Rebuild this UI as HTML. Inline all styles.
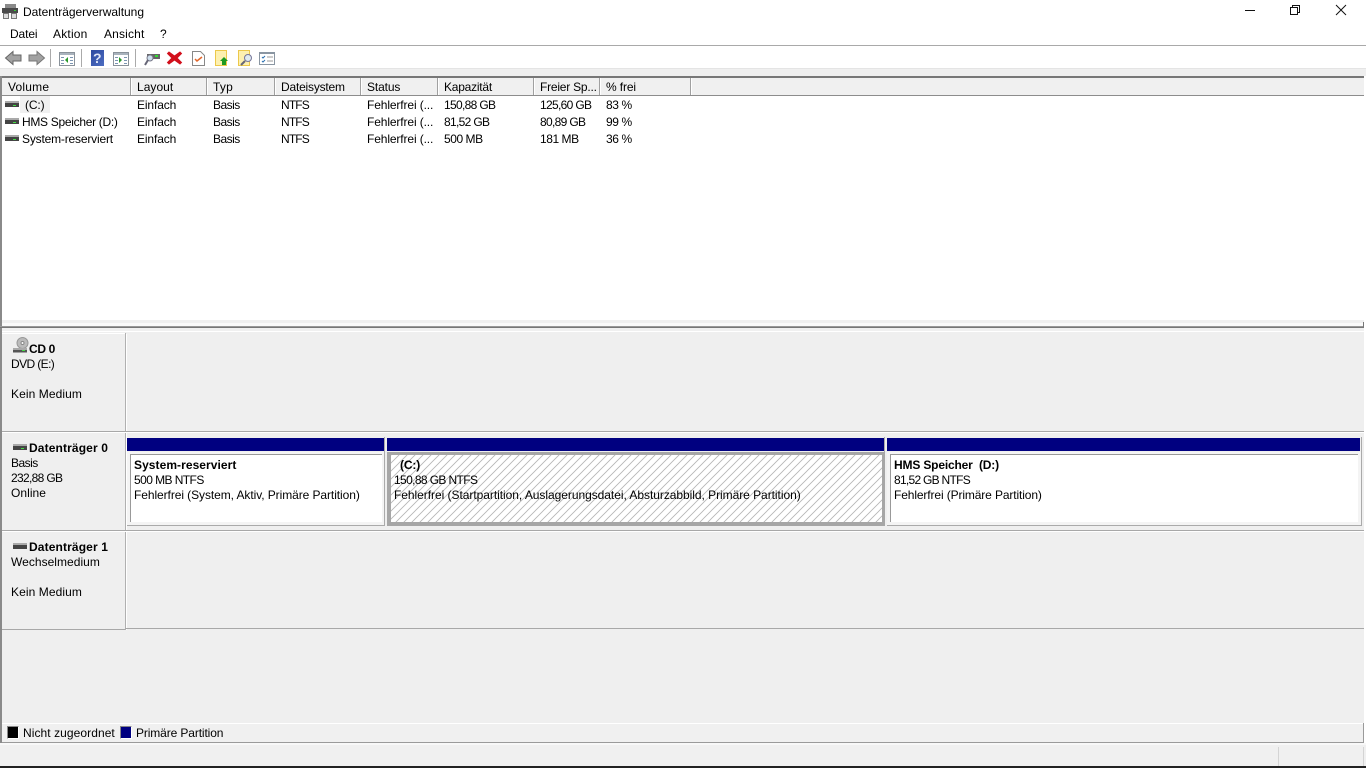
<!DOCTYPE html>
<html lang="de"><head><meta charset="utf-8"><title>Datenträgerverwaltung</title>
<style>
html,body{margin:0;padding:0;background:#f0f0f0;overflow:hidden}
#p{position:relative;width:1366px;height:768px;overflow:hidden;background:#f0f0f0;font:12px/16px "Liberation Sans",sans-serif;color:#000}
#p div{position:absolute}
.t{position:absolute;white-space:nowrap;line-height:16px;letter-spacing:-.12px}
.b{font-weight:bold}
.n{letter-spacing:-.67px}
.s{letter-spacing:-.45px}
.ba{letter-spacing:-.52px}
.nt{letter-spacing:-.85px}
.pc{letter-spacing:-.4px}
svg{position:absolute;overflow:visible}
.h{top:78px;height:17px;width:1px;background:#a0a0a0;border-right:1px solid #fff}
.d{width:14px;height:6px;background:linear-gradient(#aaa 0,#aaa 2px,#444 2px,#444 100%)}
.g{width:3px;height:1px;background:#4d4}
</style></head><body><div id="p">
<div style="left:0;top:0;width:1366px;height:45px;background:#fff"></div>
<div style="left:0;top:45px;width:1366px;height:1px;background:#a9a9a9"></div>
<div style="left:0;top:46px;width:1366px;height:22px;background:#fff"></div>
<div style="left:0;top:68px;width:1366px;height:8px;background:#efefef;border-top:1px solid #e4e4e4;box-sizing:border-box"></div>

<!-- title -->
<svg style="left:2px;top:4px" width="16" height="15" viewBox="0 0 16 15"><rect x="3" y="0" width="11" height="4" fill="#8a8a8a"/><rect x="0" y="4" width="16" height="5" fill="#4a4a4a"/><rect x="1.500" y="9.500" width="5" height="5" fill="#ddd" stroke="#777"/><rect x="9.500" y="9.500" width="5" height="5" fill="#ddd" stroke="#777"/><rect x="12" y="6" width="2" height="1" fill="#3c3"/></svg>
<span class="t" style="left:23px;top:4px;letter-spacing:-.02px">Datenträgerverwaltung</span>
<div style="left:1245px;top:10px;width:10px;height:1px;background:#111"></div>
<svg style="left:1290px;top:5px" width="10" height="10" viewBox="0 0 10 10" fill="none" stroke="#111"><path d="M.5 2.500h7v7h-7zM2.500 2.500v-2h7v7h-2"/></svg>
<svg style="left:1336px;top:5px" width="10" height="10" viewBox="0 0 10 10" fill="none" stroke="#111"><path d="M0 0l10 10M10 0L0 10"/></svg>

<!-- menu -->
<span class="t" style="left:10px;top:26px">Datei</span>
<span class="t" style="left:53px;top:26px;letter-spacing:.2px">Aktion</span>
<span class="t" style="left:104px;top:26px;letter-spacing:.16px">Ansicht</span>
<span class="t" style="left:160px;top:26px">?</span>

<!-- toolbar -->
<svg style="left:5px;top:50px" width="17" height="16" viewBox="0 0 17 16"><path d="M.5 8L8 1.500V5h8v6H8v3.500z" fill="#a2a2a2" stroke="#666"/></svg>
<svg style="left:28px;top:50px" width="17" height="16" viewBox="0 0 17 16"><path d="M16.500 8L9 1.500V5H1v6h8v3.500z" fill="#a2a2a2" stroke="#777"/></svg>
<div style="left:50px;top:49px;width:1px;height:18px;background:#aaa"></div>
<svg style="left:59px;top:52px" width="16" height="14" viewBox="0 0 16 14"><rect x=".5" y=".5" width="15" height="13" fill="#fff" stroke="#8a929a"/><rect x="1" y="1" width="14" height="2" fill="#a9b3bd"/><path d="M2 5h3v1H2zM2 8h3v1H2zM2 11h3v1H2zM11 5h3v1h-3zM11 8h3v1h-3zM11 11h3v1h-3z" fill="#7b95b2"/><path d="M9 5v6L6 8z" fill="#2a9a2a"/></svg>
<div style="left:81px;top:49px;width:1px;height:18px;background:#aaa"></div>
<div style="left:91px;top:50px;width:13px;height:16px;background:linear-gradient(135deg,#2c4aa0,#4c6cc0)"></div>
<span class="t b" style="left:93px;top:50px;color:#dfe6f7;font-size:14px">?</span>
<svg style="left:113px;top:52px" width="16" height="14" viewBox="0 0 16 14"><rect x=".5" y=".5" width="15" height="13" fill="#fff" stroke="#8a929a"/><rect x="1" y="1" width="14" height="2" fill="#a9b3bd"/><path d="M2 5h3v1H2zM2 8h3v1H2zM2 11h3v1H2zM11 5h3v1h-3zM11 8h3v1h-3zM11 11h3v1h-3z" fill="#7b95b2"/><path d="M6 5v6l3-3z" fill="#2a9a2a"/></svg>
<div style="left:135px;top:49px;width:1px;height:18px;background:#aaa"></div>
<svg style="left:144px;top:52px" width="16" height="15" viewBox="0 0 16 15"><rect x="3" y="2" width="13" height="5" fill="#666"/><rect x="11" y="3" width="3" height="2" fill="#3d3"/><circle cx="6" cy="6" r="3" fill="#cfe0ee" stroke="#778"/><path d="M4 8L1 13" stroke="#667" stroke-width="2"/></svg>
<svg style="left:167px;top:51px" width="15" height="14" viewBox="0 0 15 14"><path d="M2 1l5.500 4L13 1l1.500 1.500L10 7l4.500 4.500L13 13 7.500 9 2 13 .5 11.500 5 7 .5 2.500z" fill="#d2101c" stroke="#d2101c"/></svg>
<svg style="left:192px;top:51px" width="13" height="15" viewBox="0 0 13 15"><path d="M.5.500h8l4 4v10H.5z" fill="#fff" stroke="#888"/><path d="M3 8l2 2 5-4" fill="none" stroke="#e2662a" stroke-width="1.500"/></svg>
<svg style="left:215px;top:50px" width="14" height="16" viewBox="0 0 14 16"><rect x=".5" y=".5" width="11" height="15" fill="#fdf0b0" stroke="#ecc84a"/><path d="M9 7l4 4h-2v4H7v-4H5z" fill="#1d9a22"/></svg>
<svg style="left:238px;top:50px" width="15" height="16" viewBox="0 0 15 16"><rect x=".5" y=".5" width="11" height="15" fill="#fdf0b0" stroke="#ecc84a"/><circle cx="10" cy="8" r="3.500" fill="#dfeaf2" stroke="#779"/><path d="M7 11l-4 4" stroke="#667" stroke-width="2"/></svg>
<svg style="left:259px;top:52px" width="16" height="13" viewBox="0 0 16 13"><rect x=".5" y=".5" width="15" height="12" fill="#fff" stroke="#8a96a2"/><rect x="1" y="1" width="14" height="1" fill="#8a96a2"/><path d="M3 5l1 1 2-2M3 9l1 1 2-2" stroke="#2a70b0" fill="none"/><path d="M8 5h6M8 9h6" stroke="#999"/></svg>

<!-- list -->
<div style="left:1364px;top:76px;width:2px;height:667px;background:#fff"></div>
<div style="left:0;top:76px;width:1364px;height:2px;background:#777"></div>
<div style="left:0;top:76px;width:2px;height:252px;background:#8a8a8a"></div>
<div style="left:2px;top:78px;width:1362px;height:242px;background:#fff"></div>
<div style="left:2px;top:78px;width:1362px;height:17px;background:#f0f0f0"></div>
<div style="left:2px;top:95px;width:1362px;height:1px;background:#8c8c8c"></div>
<div class="h" style="left:130px"></div><div class="h" style="left:206px"></div><div class="h" style="left:274px"></div><div class="h" style="left:360px"></div><div class="h" style="left:437px"></div><div class="h" style="left:533px"></div><div class="h" style="left:599px"></div><div class="h" style="left:690px"></div>
<span class="t" style="left:8px;top:79px;letter-spacing:.2px">Volume</span><span class="t" style="left:137px;top:79px;letter-spacing:.04px">Layout</span><span class="t" style="left:213px;top:79px;letter-spacing:.2px">Typ</span><span class="t" style="left:281px;top:79px;letter-spacing:-.2px">Dateisystem</span><span class="t" style="left:367px;top:79px">Status</span><span class="t" style="left:444px;top:79px;letter-spacing:-.23px">Kapazität</span><span class="t" style="left:540px;top:79px;letter-spacing:-.22px">Freier Sp...</span><span class="t" style="left:606px;top:79px">% frei</span>

<div style="left:20px;top:96px;width:30px;height:17px;background:#f0f0f0"></div>
<div class="d" style="left:5px;top:101px"></div><div class="g" style="left:13px;top:105px"></div>
<div class="d" style="left:5px;top:118px"></div><div class="g" style="left:13px;top:122px"></div>
<div class="d" style="left:5px;top:135px"></div><div class="g" style="left:13px;top:139px"></div>

<span class="t" style="left:25px;top:97px">(C:)</span><span class="t" style="left:137px;top:97px">Einfach</span><span class="t ba" style="left:213px;top:97px">Basis</span><span class="t nt" style="left:281px;top:97px">NTFS</span><span class="t" style="left:367px;top:97px">Fehlerfrei (...</span><span class="t n" style="left:444px;top:97px">150,88 GB</span><span class="t n" style="left:540px;top:97px">125,60 GB</span><span class="t pc" style="left:606px;top:97px">83 %</span>
<span class="t" style="left:22px;top:114px;letter-spacing:-.3px">HMS Speicher (D:)</span><span class="t" style="left:137px;top:114px">Einfach</span><span class="t ba" style="left:213px;top:114px">Basis</span><span class="t nt" style="left:281px;top:114px">NTFS</span><span class="t" style="left:367px;top:114px">Fehlerfrei (...</span><span class="t n" style="left:444px;top:114px">81,52 GB</span><span class="t n" style="left:540px;top:114px">80,89 GB</span><span class="t pc" style="left:606px;top:114px">99 %</span>
<span class="t" style="left:22px;top:131px;letter-spacing:-.18px">System-reserviert</span><span class="t" style="left:137px;top:131px">Einfach</span><span class="t ba" style="left:213px;top:131px">Basis</span><span class="t nt" style="left:281px;top:131px">NTFS</span><span class="t" style="left:367px;top:131px">Fehlerfrei (...</span><span class="t s" style="left:444px;top:131px">500 MB</span><span class="t s" style="left:540px;top:131px">181 MB</span><span class="t pc" style="left:606px;top:131px">36 %</span>

<!-- splitter -->
<div style="left:2px;top:320px;width:1362px;height:3px;background:#f0f0f0"></div>
<div style="left:2px;top:323px;width:1362px;height:3px;background:#fafafa"></div>
<div style="left:0;top:326px;width:1364px;height:1px;background:#999"></div>
<div style="left:0;top:327px;width:1364px;height:1px;background:#777"></div>
<div style="left:1363px;top:322px;width:1px;height:6px;background:#777"></div>
<div style="left:2px;top:328px;width:1362px;height:3px;background:#f0f0f0"></div>
<div style="left:2px;top:331px;width:1362px;height:1px;background:#fff"></div>
<div style="left:0;top:328px;width:2px;height:415px;background:#8a8a8a"></div>
<div style="left:2px;top:332px;width:1362px;height:391px;background:#efefef"></div>

<!-- rows -->
<div style="left:2px;top:333px;width:123px;height:1px;background:#fff"></div>
<div style="left:125px;top:333px;width:1px;height:297px;background:#b0b0b0"></div>
<div style="left:126px;top:334px;width:1px;height:296px;background:#fff"></div>
<div style="left:2px;top:431px;width:1362px;height:1px;background:#a8a8a8"></div>
<div style="left:2px;top:432px;width:1362px;height:1px;background:#fff"></div>
<div style="left:2px;top:530px;width:1362px;height:1px;background:#a8a8a8"></div>
<div style="left:2px;top:531px;width:1362px;height:1px;background:#fff"></div>
<div style="left:2px;top:629px;width:123px;height:1px;background:#a8a8a8"></div>
<div style="left:125px;top:628px;width:1239px;height:1px;background:#a8a8a8"></div>

<svg style="left:13px;top:337px" width="16" height="16" viewBox="0 0 16 16"><circle cx="9.500" cy="6" r="5.500" fill="#bbb" stroke="#999"/><circle cx="9.500" cy="6" r="1.500" fill="#fff" stroke="#888"/><rect x="0" y="11" width="14" height="2" fill="#aaa"/><rect x="0" y="13" width="14" height="2.500" fill="#555"/><rect x="9" y="13" width="3" height="1" fill="#4d4"/></svg>
<span class="t b" style="left:29px;top:341px;letter-spacing:-.35px">CD 0</span>
<span class="t" style="left:11px;top:356px;letter-spacing:-.6px">DVD (E:)</span>
<span class="t" style="left:11px;top:386px;letter-spacing:.08px">Kein Medium</span>

<div class="d" style="left:13px;top:444px"></div><div class="g" style="left:21px;top:448px"></div>
<span class="t b" style="left:29px;top:440px;letter-spacing:.13px">Datenträger 0</span>
<span class="t ba" style="left:11px;top:455px">Basis</span>
<span class="t n" style="left:11px;top:470px">232,88 GB</span>
<span class="t" style="left:11px;top:485px;letter-spacing:.05px">Online</span>

<div class="d" style="left:13px;top:543px"></div>
<span class="t b" style="left:29px;top:539px;letter-spacing:.13px">Datenträger 1</span>
<span class="t" style="left:11px;top:554px;letter-spacing:.03px">Wechselmedium</span>
<span class="t" style="left:11px;top:584px;letter-spacing:.08px">Kein Medium</span>

<!-- partition 1 -->
<div style="left:127px;top:438px;width:257px;height:13px;background:#000080"></div>
<div style="left:384px;top:437px;width:1px;height:89px;background:#aaa"></div>
<div style="left:127px;top:525px;width:258px;height:1px;background:#aaa"></div>
<div style="left:127px;top:452px;width:257px;height:73px;background:#f4f4f4"></div>
<div style="left:130px;top:454px;width:252px;height:68px;background:#fff"></div>
<div style="left:130px;top:454px;width:252px;height:1px;background:#999"></div>
<div style="left:130px;top:454px;width:1px;height:68px;background:#999"></div>
<span class="t b" style="left:134px;top:457px;letter-spacing:.06px">System-reserviert</span>
<span class="t" style="left:134px;top:472px;letter-spacing:-.57px">500 MB NTFS</span>
<span class="t" style="left:134px;top:487px;letter-spacing:-.076px">Fehlerfrei (System, Aktiv, Primäre Partition)</span>

<!-- partition 2 -->
<div style="left:387px;top:438px;width:497px;height:13px;background:#000080"></div>
<div style="left:884px;top:437px;width:1px;height:89px;background:#aaa"></div>
<div style="left:387px;top:452px;width:498px;height:74px;background:#a6a6a6"></div>
<svg style="left:391px;top:455px" width="491" height="67" viewBox="0 0 491 67"><defs><pattern id="h" width="8" height="8" patternUnits="userSpaceOnUse"><rect width="8" height="8" fill="#fff"/><path d="M-1 9L9 -1M-1 1L1 -1M7 9L9 7" stroke="#b4b4b4" stroke-width=".8"/></pattern></defs><rect width="491" height="67" fill="url(#h)"/></svg>
<span class="t b" style="left:400px;top:457px">(C:)</span>
<span class="t" style="left:394px;top:472px;letter-spacing:-.62px">150,88 GB NTFS</span>
<span class="t" style="left:394px;top:487px;letter-spacing:-.044px">Fehlerfrei (Startpartition, Auslagerungsdatei, Absturzabbild, Primäre Partition)</span>

<!-- partition 3 -->
<div style="left:887px;top:438px;width:473px;height:13px;background:#000080"></div>
<div style="left:1361px;top:437px;width:1px;height:89px;background:#aaa"></div>
<div style="left:887px;top:525px;width:475px;height:1px;background:#aaa"></div>
<div style="left:887px;top:452px;width:474px;height:73px;background:#f4f4f4"></div>
<div style="left:890px;top:454px;width:468px;height:68px;background:#fff"></div>
<div style="left:890px;top:454px;width:468px;height:1px;background:#999"></div>
<div style="left:890px;top:454px;width:1px;height:68px;background:#999"></div>
<span class="t b" style="left:894px;top:457px;letter-spacing:-.17px">HMS Speicher&nbsp; (D:)</span>
<span class="t" style="left:894px;top:472px;letter-spacing:-.72px">81,52 GB NTFS</span>
<span class="t" style="left:894px;top:487px">Fehlerfrei (Primäre Partition)</span>

<!-- legend -->
<div style="left:2px;top:723px;width:1361px;height:1px;background:#fff"></div>
<div style="left:2px;top:742px;width:1362px;height:1px;background:#9a9a9a"></div>
<div style="left:1363px;top:723px;width:1px;height:20px;background:#9a9a9a"></div>
<div style="left:2px;top:724px;width:1361px;height:18px;background:#f0f0f0"></div>
<div style="left:7px;top:726px;width:10px;height:11px;background:#000;border:1px solid;border-color:#888 #fff #fff #888"></div>
<span class="t" style="left:23px;top:725px;letter-spacing:.07px">Nicht zugeordnet</span>
<div style="left:120px;top:726px;width:10px;height:11px;background:#000080;border:1px solid;border-color:#888 #fff #fff #888"></div>
<span class="t" style="left:136px;top:725px">Primäre Partition</span>

<!-- status -->
<div style="left:0;top:743px;width:1366px;height:2px;background:#f8f8f8"></div>
<div style="left:1278px;top:747px;width:1px;height:19px;background:#d4d4d4"></div>
<div style="left:1363px;top:747px;width:1px;height:19px;background:#d4d4d4"></div>
<div style="left:0;top:766px;width:1366px;height:2px;background:#222"></div>
</div></body></html>
